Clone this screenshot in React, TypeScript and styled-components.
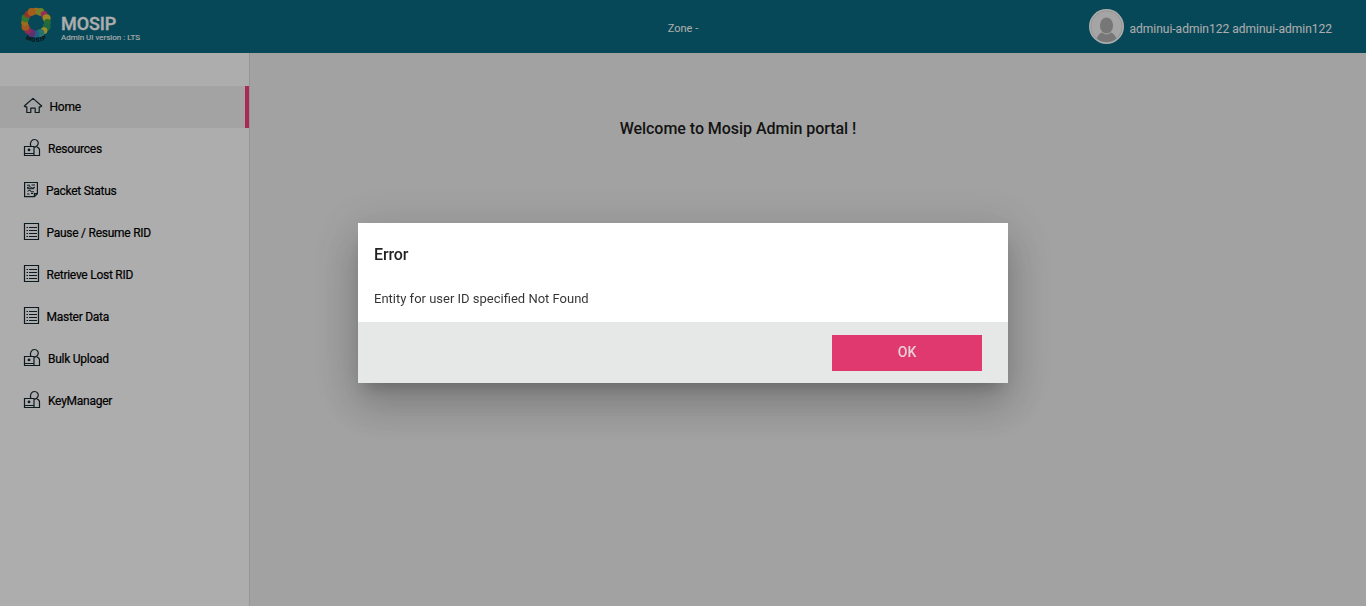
import React from "react";
import styled, { createGlobalStyle } from "styled-components";

const GlobalStyle = createGlobalStyle`
  *, *::before, *::after { box-sizing: border-box; }
  html, body, #root { height: 100%; margin: 0; }
  body { font-family: Roboto, "Liberation Sans", sans-serif; overflow: hidden; }
`;

const Page = styled.div`
  height: 100vh;
  display: flex;
  flex-direction: column;
`;

const Header = styled.header`
  flex: 0 0 53px;
  display: grid;
  grid-template-columns: 1fr auto 1fr;
  background: #0a6a82;
  color: #fff;
`;

const Brand = styled.div`
  display: flex;
  padding: 7px 0 0 20px;
`;

const BrandText = styled.div`
  padding: 7px 0 0 9px;
`;

const BrandName = styled.div`
  font-size: 18px;
  line-height: 19px;
  font-weight: 500;
  letter-spacing: -0.1px;
  -webkit-text-stroke: 0.3px #fff;
`;

const Version = styled.div`
  font-size: 8px;
  line-height: 9px;
  -webkit-text-stroke: 0.1px #fff;
`;

const Zone = styled.div`
  font-size: 11px;
  line-height: 14px;
  padding-top: 22px;
`;

const User = styled.div`
  display: flex;
  justify-content: flex-end;
  gap: 5px;
  padding: 9px 34px 0 0;
`;

const UserName = styled.span`
  font-size: 12px;
  line-height: 16px;
  padding-top: 12px;
`;

const Body = styled.div`
  flex: 1;
  display: flex;
  min-height: 0;
`;

const Sidebar = styled.nav`
  flex: 0 0 250px;
  padding-top: 33px;
  background: #fff;
  border-right: 1px solid #dcdcdc;
`;

const NavItem = styled.a<{ $active?: boolean }>`
  display: flex;
  align-items: center;
  height: 42px;
  padding-left: 23px;
  color: #000;
  font-size: 12px;
  line-height: 14px;
  background: ${(p) => (p.$active ? "#f0f0f0" : "transparent")};
  border-right: 4px solid ${(p) => (p.$active ? "#fd3c7e" : "transparent")};
`;

const NavLabel = styled.span<{ $gap: number }>`
  margin-left: ${(p) => p.$gap}px;
  letter-spacing: -0.26px;
  -webkit-text-stroke: 0.2px #000;
`;

const NavIcon = styled.svg`
  flex: none;
  margin-bottom: 3px;
  fill: none;
  stroke: #12262e;
  stroke-width: 1.2;
`;

const Content = styled.main`
  flex: 1;
  background: #efefef;
  text-align: center;
  padding-top: 65px;
`;

const Welcome = styled.h1`
  margin: 0;
  padding-right: 140px;
  font-size: 16px;
  line-height: 22px;
  font-weight: 500;
  letter-spacing: -0.04px;
  color: #1c1c1c;
`;

const Backdrop = styled.div`
  position: fixed;
  inset: 0;
  display: flex;
  align-items: center;
  justify-content: center;
  background: rgba(0, 0, 0, 0.32);
`;

const Dialog = styled.section`
  width: 650px;
  height: 160px;
  display: flex;
  flex-direction: column;
  background: #fff;
  color: rgba(0, 0, 0, 0.87);
  box-shadow: 0 11px 15px -7px rgba(0, 0, 0, 0.2),
    0 24px 38px 3px rgba(0, 0, 0, 0.14), 0 9px 46px 8px rgba(0, 0, 0, 0.12);
`;

const DialogBody = styled.div`
  flex: 1;
  padding: 21px 16px 0;
`;

const DialogTitle = styled.h2`
  margin: 0 0 24px;
  font-size: 16px;
  line-height: 22px;
  font-weight: 500;
  letter-spacing: -0.1px;
`;

const Message = styled.p`
  margin: 0;
  font-size: 13px;
  line-height: 18px;
  color: rgba(0, 0, 0, 0.8);
`;

const DialogFooter = styled.footer`
  flex: 0 0 61px;
  display: flex;
  justify-content: flex-end;
  align-items: flex-start;
  padding: 13px 26px 0 0;
  background: #e5e8e7;
`;

const OkButton = styled.button`
  width: 150px;
  height: 36px;
  padding: 0 0 2px;
  border: 0;
  background: #e03970;
  color: #e8d0d8;
  font: 500 14px/34px Roboto, sans-serif;
`;

const dotColors = [
  "#f0a02a", "#a8c03a", "#e0457f", "#e3c832", "#3f9e4a", "#2e9a62", "#e8d23a", "#3aa9a0",
  "#2f8fd0", "#8b4aa0", "#d2407a", "#f07f2d", "#e8a02c", "#4fae4c", "#e0483b", "#f08a2a",
];

function Logo() {
  return (
    <svg width="32" height="36" viewBox="0 0 32 36">
      {dotColors.map((color, i) => {
        const a = (i / dotColors.length) * Math.PI * 2 - Math.PI / 2;
        return (
          <circle
            key={color}
            cx={16 + Math.cos(a) * 11.4}
            cy={15.5 + Math.sin(a) * 11.4}
            r={i % 2 ? 4 : 3.4}
            fill={color}
          />
        );
      })}
      <circle cx="16" cy="15.5" r="7.6" fill="#0a6a82" />
      <defs>
        <path id="logo-curve" d="M5.5 32 Q16 38 28 31.5" />
      </defs>
      <text fontSize="6" fontWeight="900" fill="#091a22" letterSpacing="0.8">
        <textPath href="#logo-curve">MOSIP</textPath>
      </text>
    </svg>
  );
}

function Avatar() {
  return (
    <svg width="35" height="35" viewBox="0 0 35 35">
      <defs>
        <clipPath id="avatar-clip">
          <circle cx="17.5" cy="17.5" r="15.5" />
        </clipPath>
      </defs>
      <circle cx="17.5" cy="17.5" r="17.5" fill="#fff" />
      <circle cx="17.5" cy="17.5" r="15.7" fill="#f4f4f4" stroke="#cfd4d4" strokeWidth="0.8" />
      <g clipPath="url(#avatar-clip)" fill="#b0b0b0">
        <ellipse cx="17.5" cy="16.5" rx="6.6" ry="8" />
        <path d="M7 34 Q7.5 25.5 13 23.5 Q17.5 27.5 22 23.5 Q27.5 25.5 28 34Z" />
      </g>
    </svg>
  );
}

function HomeIcon() {
  return (
    <NavIcon width="20" height="19" viewBox="0 0 20 19" strokeLinejoin="round">
      <path d="M1.3 10 10 2.4l8.7 7.6-1 .8h-1.5v5.7h-4v-4.3H7.8v4.3h-4v-5.7H2.3z" />
    </NavIcon>
  );
}

function LockUserIcon() {
  return (
    <NavIcon width="18" height="19" viewBox="0 0 18 19">
      <path d="M1.5 8.5h9.5v9H1.5zM1.5 15.5H11M11 17.5h5.5V12q0-2.2-2.8-3" />
      <path d="M7.8 8.2C6.6 4.6 8.6 1.5 11.4 1.5s4.6 2.6 3.6 5q-.8 1.9-2.6 2.4l-1.2.6" />
      <circle cx="6" cy="11.9" r="0.8" fill="#12262e" />
    </NavIcon>
  );
}

function PacketIcon() {
  return (
    <NavIcon width="16" height="19" viewBox="0 0 16 19">
      <path d="M1.6 2.5h12.8v11.2l-3 3H1.6zM14.4 13.7h-3v3" />
      <path d="M4 5.2h3M8.5 5H12M4 7.7l3-1 2 1.5 3-1M4.2 8.7h7M4.5 11.3 7 10l1 1.8h3M4 14h2.5M8 13.5h2" strokeWidth="1" />
    </NavIcon>
  );
}

function ListIcon() {
  return (
    <NavIcon width="17" height="19" viewBox="0 0 17 19">
      <path d="M1.5 1.5h14v16h-14z" />
      <path d="M3.5 5.5H5M6 5.5h8M3.5 8.5H5M6 8.5h8M3.5 11.5H5M6 11.5h8M3.5 14.5H5M6 14.5h8" strokeWidth="1.2" />
    </NavIcon>
  );
}

const items = [
  { label: "Home", Icon: HomeIcon, gap: 6.5 },
  { label: "Resources", Icon: LockUserIcon, gap: 7 },
  { label: "Packet Status", Icon: PacketIcon, gap: 7 },
  { label: "Pause / Resume RID", Icon: ListIcon, gap: 6.5 },
  { label: "Retrieve Lost RID", Icon: ListIcon, gap: 6.5 },
  { label: "Master Data", Icon: ListIcon, gap: 6.5 },
  { label: "Bulk Upload", Icon: LockUserIcon, gap: 7 },
  { label: "KeyManager", Icon: LockUserIcon, gap: 7 },
];

export default function App() {
  return (
    <>
      <GlobalStyle />
      <Page>
        <Header>
          <Brand>
            <Logo />
            <BrandText>
              <BrandName>MOSIP</BrandName>
              <Version>Admin UI version : LTS</Version>
            </BrandText>
          </Brand>
          <Zone>Zone -</Zone>
          <User>
            <Avatar />
            <UserName>adminui-admin122 adminui-admin122</UserName>
          </User>
        </Header>
        <Body>
          <Sidebar>
            {items.map(({ label, Icon, gap }, i) => (
              <NavItem key={label} $active={i === 0}>
                <Icon />
                <NavLabel $gap={gap}>{label}</NavLabel>
              </NavItem>
            ))}
          </Sidebar>
          <Content>
            <Welcome>Welcome to Mosip Admin portal !</Welcome>
          </Content>
        </Body>
      </Page>
      <Backdrop>
        <Dialog role="dialog">
          <DialogBody>
            <DialogTitle>Error</DialogTitle>
            <Message>Entity for user ID specified Not Found</Message>
          </DialogBody>
          <DialogFooter>
            <OkButton>OK</OkButton>
          </DialogFooter>
        </Dialog>
      </Backdrop>
    </>
  );
}
